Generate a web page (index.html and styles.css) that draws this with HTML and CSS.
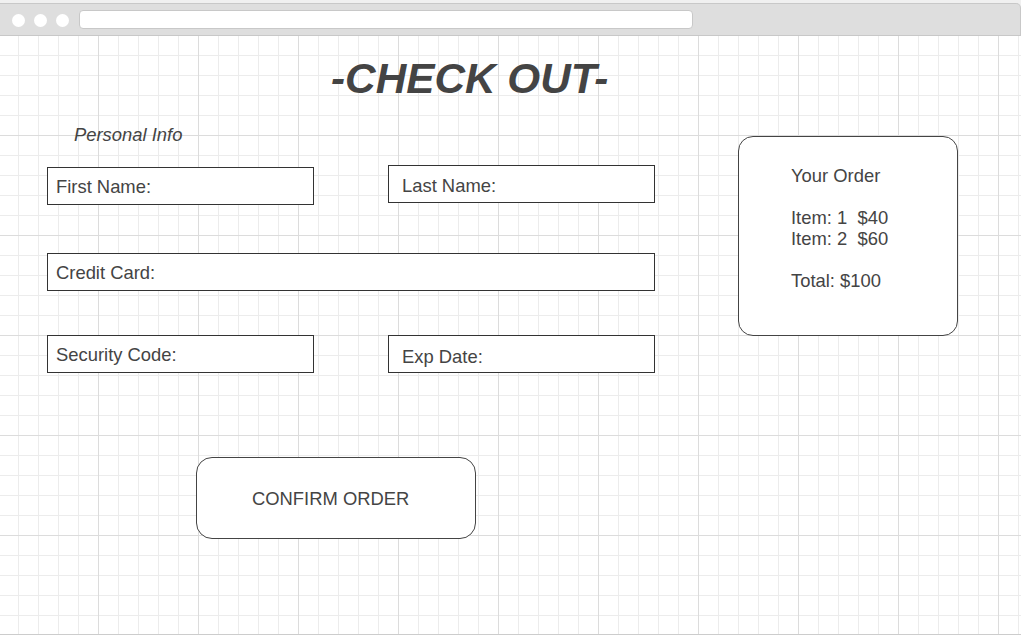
FILE: index.html
```html
<!DOCTYPE html>
<html>
<head>
<meta charset="utf-8">
<link rel="stylesheet" href="styles.css">
</head>
<body>
<div class="chrome">
  <div class="bar">
    <span class="dot"></span>
    <span class="dot"></span>
    <span class="dot"></span>
    <div class="url"></div>
  </div>
</div>
<div class="canvas">
  <h1 class="title">-CHECK OUT-</h1>
  <div class="main">
    <div class="form">
      <div class="section-label">Personal Info</div>
      <div class="row row-1">
        <div class="field field-half field-first">First Name:</div>
        <div class="field field-half field-right field-last">Last Name:</div>
      </div>
      <div class="row row-2">
        <div class="field field-full">Credit Card:</div>
      </div>
      <div class="row row-3">
        <div class="field field-half">Security Code:</div>
        <div class="field field-half field-right field-exp">Exp Date:</div>
      </div>
      <div class="confirm">CONFIRM ORDER</div>
    </div>
    <div class="order">
      <div class="order-line">Your Order</div>
      <div class="order-line">&nbsp;</div>
      <div class="order-line">Item: 1  $40</div>
      <div class="order-line">Item: 2  $60</div>
      <div class="order-line">&nbsp;</div>
      <div class="order-line">Total: $100</div>
    </div>
  </div>
</div>
</body>
</html>
```

FILE: styles.css
```css
html, body {
  margin: 0;
  padding: 0;
}
body {
  width: 1021px;
  height: 635px;
  overflow: hidden;
  background: #ffffff;
  font-family: "Liberation Sans", Arial, sans-serif;
  color: #444444;
}
.chrome {
  padding-top: 3px;
  background: #f0f0f0;
  height: 33px;
}
.bar {
  box-sizing: border-box;
  height: 33px;
  background: #dedede;
  border: 1px solid #c8c8c8;
  border-left: none;
  border-top-right-radius: 5px;
  display: flex;
  align-items: flex-start;
  padding-left: 12px;
}
.dot {
  width: 13px;
  height: 13px;
  border-radius: 50%;
  background: #ffffff;
  margin-top: 10px;
  margin-right: 9px;
  flex: none;
}
.dot:nth-child(3) {
  margin-right: 10px;
}
.url {
  margin-top: 6px;
  width: 614px;
  height: 19px;
  box-sizing: border-box;
  background: #ffffff;
  border: 1px solid #c8c8c8;
  border-radius: 4px;
}
.canvas {
  height: 598px;
  border-bottom: 1px solid #cccccc;
  overflow: hidden;
  background-color: #ffffff;
  background-image:
    linear-gradient(to right, #dcdcdc 1px, transparent 1px),
    linear-gradient(to bottom, #dcdcdc 1px, transparent 1px),
    linear-gradient(to right, #ececec 1px, transparent 1px),
    linear-gradient(to bottom, #ececec 1px, transparent 1px);
  background-size: 100px 100px, 100px 100px, 20px 20px, 20px 20px;
  background-position: 98px 0, 0 99px, 18px 0, 0 19px;
}
.title {
  margin: 19px 0 0 331px;
  font-size: 42.3px;
  line-height: 48px;
  font-weight: bold;
  font-style: italic;
  color: #444444;
}
.main {
  display: flex;
  align-items: flex-start;
  margin-top: 20px;
}
.form {
  margin-left: 47px;
  width: 608px;
}
.section-label {
  padding-left: 27px;
  padding-top: 1px;
  height: 20px;
  font-size: 18.4px;
  line-height: 21px;
  font-style: italic;
}
.row {
  display: flex;
  align-items: flex-start;
  justify-content: space-between;
}
.row-1 { margin-top: 21px; }
.row-2 { margin-top: 48px; }
.row-3 { margin-top: 44px; }
.field {
  box-sizing: border-box;
  height: 38px;
  border: 1px solid #333333;
  background: #ffffff;
  display: flex;
  align-items: center;
  padding-left: 8px;
  padding-top: 0;
  font-size: 18.4px;
  line-height: 21px;
}
.field-half { width: 267px; }
.field-full { width: 608px; }
.field-first { margin-top: 2px; }
.field-right { padding-left: 13px; }
.field-last { padding-top: 3px; }
.field-exp { padding-top: 5px; }
.confirm {
  box-sizing: border-box;
  margin: 84px 0 0 149px;
  width: 280px;
  height: 82px;
  border: 1px solid #444444;
  border-radius: 16px;
  background: #ffffff;
  display: flex;
  align-items: center;
  padding-left: 55px;
  font-size: 18.4px;
  line-height: 21px;
}
.order {
  box-sizing: border-box;
  margin: 13px 0 0 83px;
  width: 220px;
  height: 200px;
  border: 1px solid #444444;
  border-radius: 15px;
  background: #ffffff;
  padding: 28px 0 0 52px;
  font-size: 18.4px;
  line-height: 21px;
}
.order-line {
  white-space: pre;
}
```
